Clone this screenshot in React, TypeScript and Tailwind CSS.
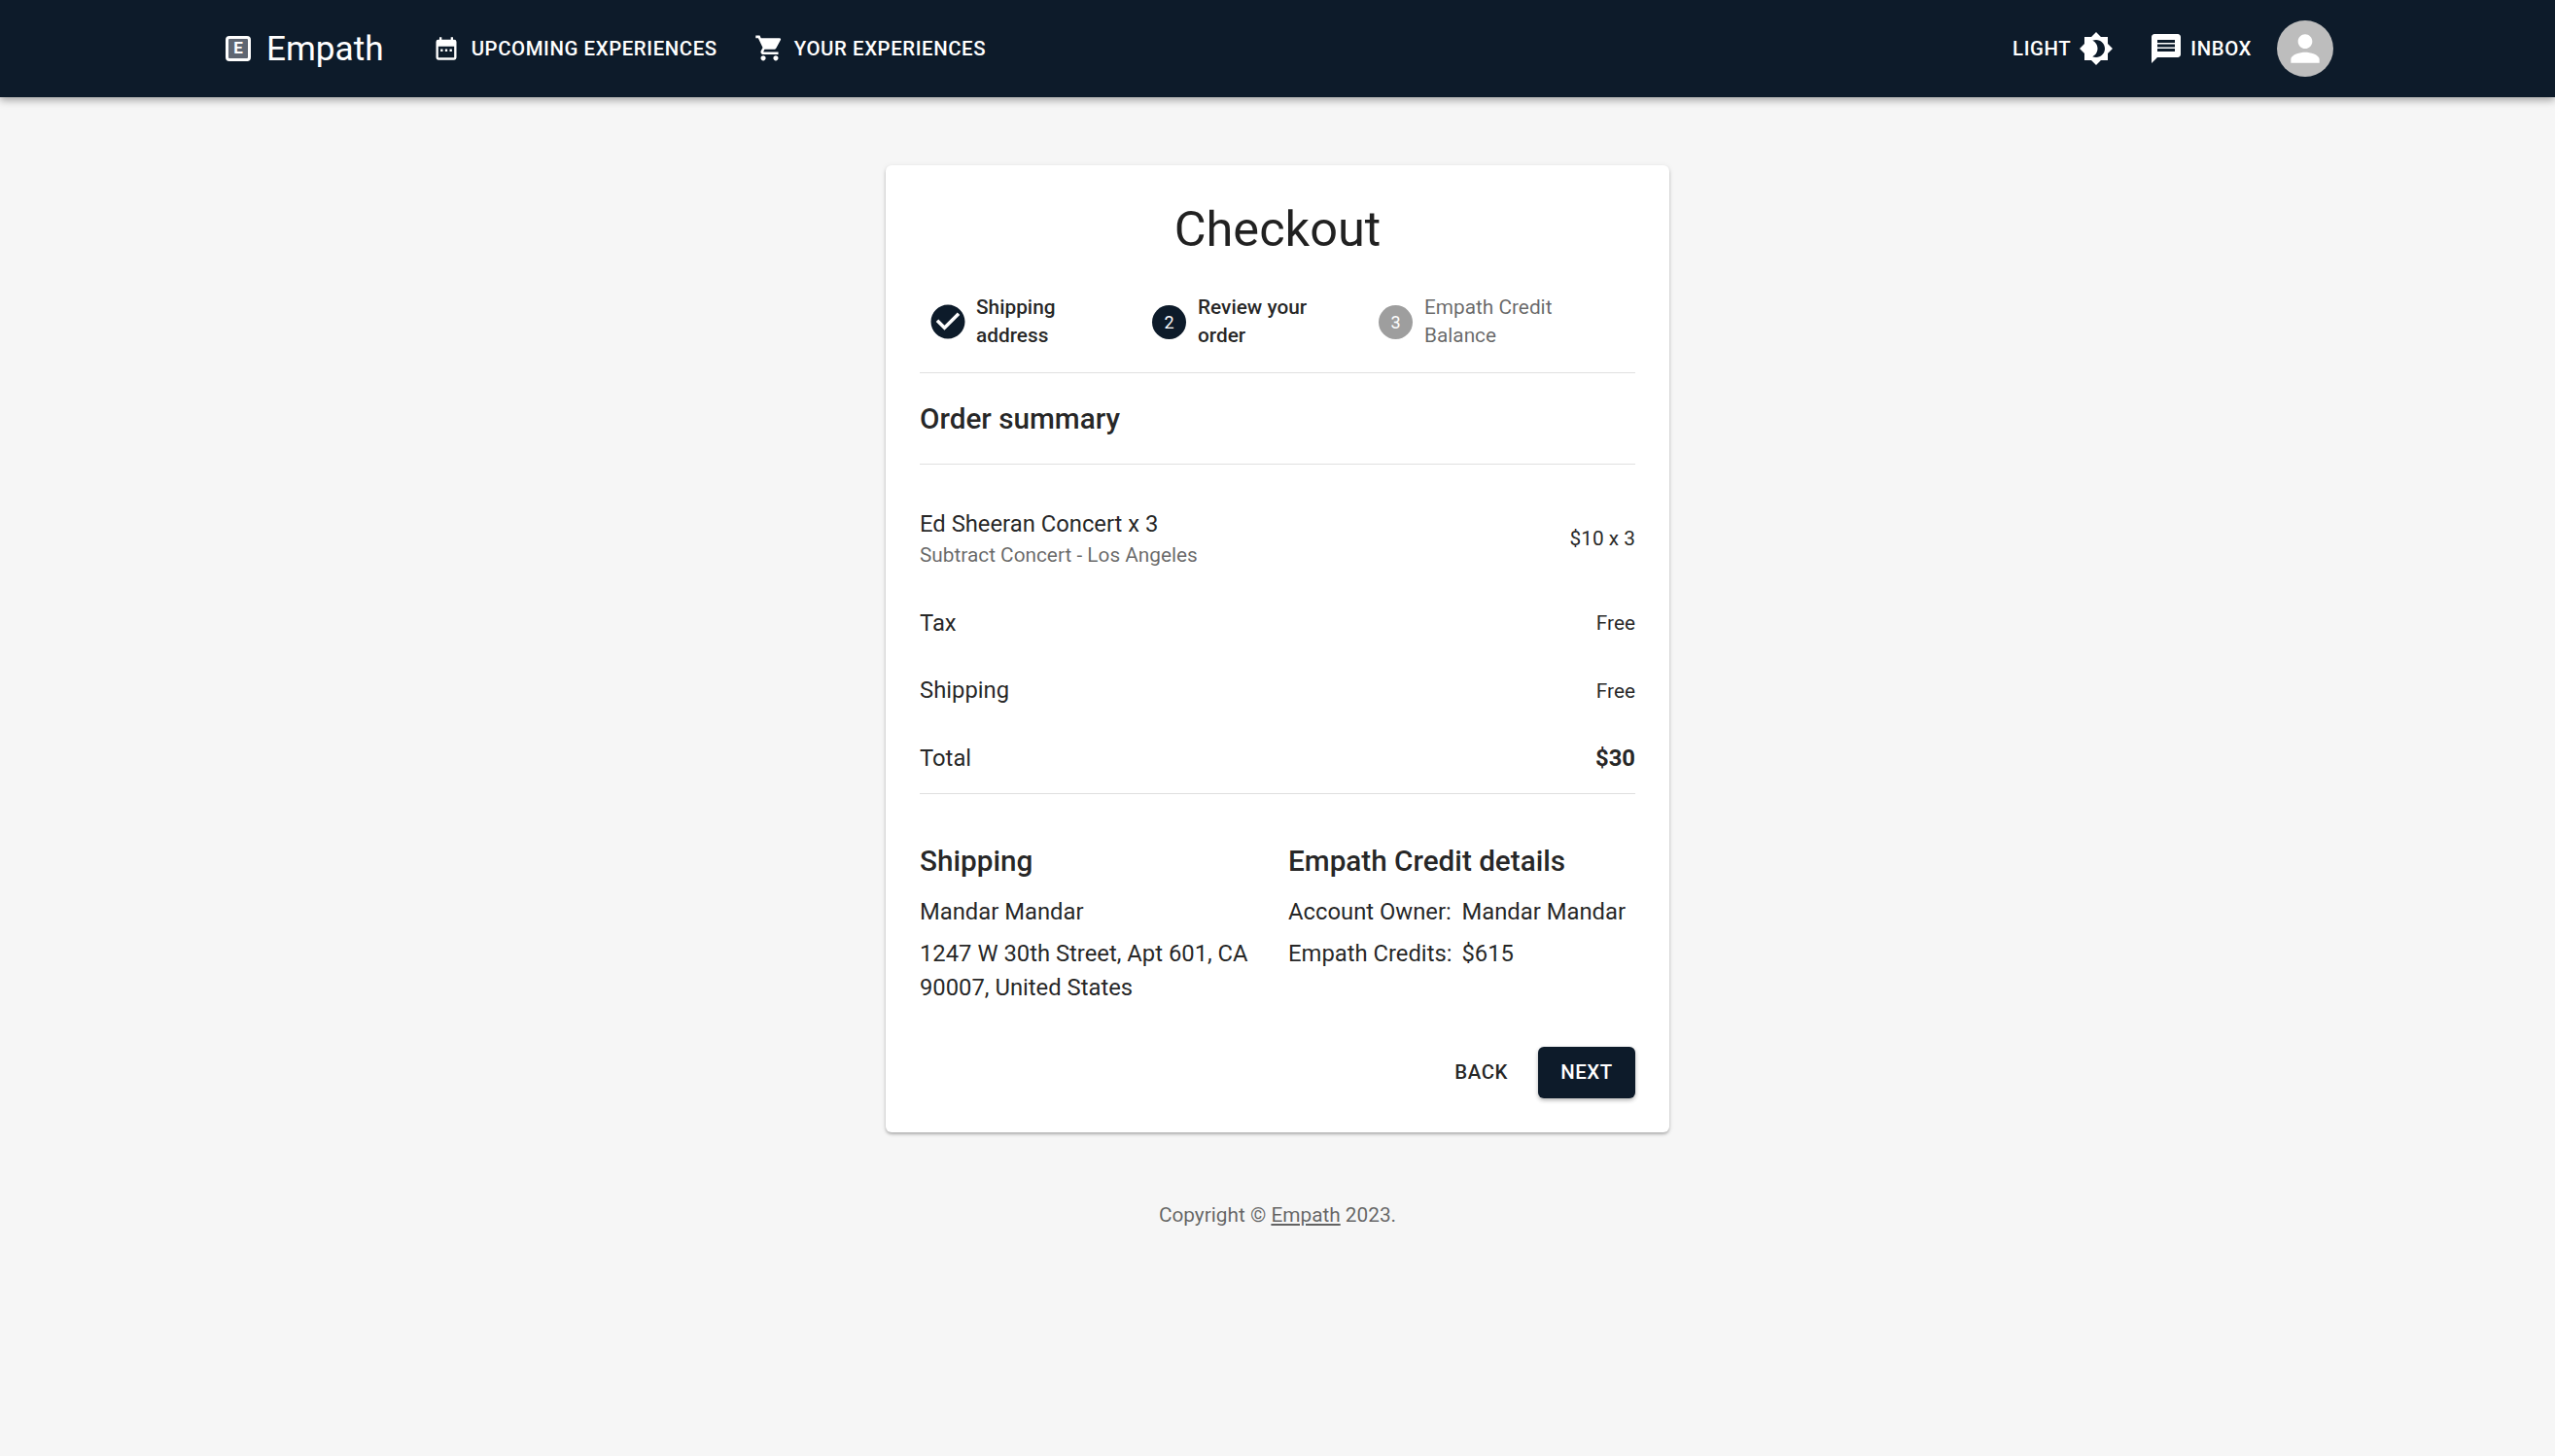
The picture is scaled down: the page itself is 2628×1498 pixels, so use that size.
import { MdBrightness4, MdCheckCircle, MdMessage, MdPerson, MdShoppingCart } from "react-icons/md";

const CalendarIcon = () => (
    <svg viewBox="0 0 24 24" className="w-[28px] h-[28px] fill-white">
        <path d="M19 4h-1V2h-2v2H8V2H6v2H5a2 2 0 0 0-2 2v14a2 2 0 0 0 2 2h14a2 2 0 0 0 2-2V6a2 2 0 0 0-2-2Zm0 16H5V10h14v10ZM7 12.5h2v2H7v-2Zm4 0h2v2h-2v-2Zm4 0h2v2h-2v-2Z" />
    </svg>
);

const Step = ({ icon, label, muted, className }: { icon: React.ReactNode; label: string[]; muted?: boolean; className: string }) => (
    <div className={`flex items-center ${className}`}>
        {typeof icon === "string" ? (
            <div
                className={`w-[35px] h-[35px] rounded-full flex items-center justify-center text-white text-[18px] shrink-0 ${
                    muted ? "bg-[#9e9e9e]" : "bg-[#0d1b2a]"
                }`}
            >
                {icon}
            </div>
        ) : (
            <div className="w-[35px] h-[35px] flex items-center justify-center shrink-0 text-[#0d1b2a]">{icon}</div>
        )}
        <div className={`pl-[12px] text-[20.8px] leading-[29px] ${muted ? "text-[#00000099]" : "font-medium text-[#000000de]"}`}>
            {label.map((l) => (
                <div key={l}>{l}</div>
            ))}
        </div>
    </div>
);

const Row = ({ name, value, bold }: { name: string; value: string; bold?: boolean }) => (
    <div className="flex items-center justify-between h-[69.5px]">
        <span className="text-[23.8px]">{name}</span>
        <span className={bold ? "text-[23.8px] font-bold" : "text-[20.8px]"}>{value}</span>
    </div>
);

export default function App() {
    return (
        <div className="min-h-screen bg-[#f6f6f6] font-['Roboto',sans-serif] text-[#000000de]">
            {/* Header */}
            <header className="h-[100px] bg-[#0d1b2a] text-white flex items-center justify-between pl-[232px] pr-[228px] shadow-[0_3px_8px_rgba(0,0,0,0.35)]">
                <div className="flex items-center">
                    <div className="w-[26px] h-[26px] rounded-[4px] border-[3px] border-white bg-[#5f6672] flex items-center justify-center text-[17px] font-bold leading-none">
                        E
                    </div>
                    <span className="ml-[16px] pt-[2px] text-[35.2px] leading-none">Empath</span>
                    <div className="ml-[50px] flex items-center gap-[12px] text-[20.4px] font-medium tracking-[0.58px]">
                        <CalendarIcon />
                        UPCOMING EXPERIENCES
                    </div>
                    <div className="ml-[38px] flex items-center gap-[10px] text-[20.4px] font-medium tracking-[0.58px]">
                        <MdShoppingCart size={31} />
                        YOUR EXPERIENCES
                    </div>
                </div>
                <div className="flex items-center text-[20.4px] font-medium tracking-[0.58px]">
                    LIGHT
                    <MdBrightness4 size={36} className="ml-[8px]" />
                    <MdMessage size={36} className="ml-[36px]" />
                    <span className="ml-[7px]">INBOX</span>
                    <div className="ml-[26px] w-[58px] h-[58px] rounded-full bg-[#bdbdbd] flex items-center justify-center">
                        <MdPerson size={44} />
                    </div>
                </div>
            </header>

            {/* Checkout card */}
            <main className="flex flex-col items-center pt-[70px]">
                <div className="w-[806px] h-[995px] bg-white rounded-[6px] px-[35px] shadow-[0_2px_3px_rgba(0,0,0,0.25),0_1px_6px_rgba(0,0,0,0.08)]">
                    <h1 className="text-center text-[50.5px] leading-[64px] pt-[34px]">Checkout</h1>
                    <div className="flex items-center h-[58px] mt-[34px] pl-[11px]">
                        <Step className="w-[228px]" icon={<MdCheckCircle size={42} className="shrink-0" />} label={["Shipping", "address"]} />
                        <Step className="w-[233px]" icon="2" label={["Review your", "order"]} />
                        <Step className="" icon="3" label={["Empath Credit", "Balance"]} muted />
                    </div>
                    <div className="mt-[23px] border-t border-[#e0e0e0]" />
                    <h2 className="h-[93px] pt-[2px] flex items-center text-[29.7px] font-medium">Order summary</h2>
                    <div className="border-t border-[#e0e0e0]" />

                    <div className="flex items-center justify-between mt-[45px] h-[64px]">
                        <div>
                            <div className="text-[23.8px] leading-[32px]">Ed Sheeran Concert x 3</div>
                            <div className="text-[20.8px] leading-[32px] text-[#00000099]">Subtract Concert - Los Angeles</div>
                        </div>
                        <span className="text-[20.8px]">$10 x 3</span>
                    </div>
                    <div className="mt-[20px]">
                        <Row name="Tax" value="Free" />
                        <Row name="Shipping" value="Free" />
                        <Row name="Total" value="$30" bold />
                    </div>
                    <div className="border-t border-[#e0e0e0]" />

                    <div className="grid grid-cols-[379px_1fr] mt-[48px]">
                        <div>
                            <h3 className="text-[29.7px] leading-[42px] font-medium">Shipping</h3>
                            <p className="text-[23.8px] leading-[35px] mt-[14px]">Mandar Mandar</p>
                            <p className="text-[23.8px] leading-[35px] mt-[8px]">
                                1247 W 30th Street, Apt 601, CA
                                <br />
                                90007, United States
                            </p>
                        </div>
                        <div>
                            <h3 className="text-[29.7px] leading-[42px] font-medium">Empath Credit details</h3>
                            <div className="grid grid-cols-[auto_1fr] gap-x-[10px] gap-y-[8px] text-[23.8px] leading-[35px] mt-[14px]">
                                <span>Account Owner:</span>
                                <span>Mandar Mandar</span>
                                <span>Empath Credits:</span>
                                <span>$615</span>
                            </div>
                        </div>
                    </div>

                    <div className="flex items-center justify-end mt-[43px]">
                        <button className="text-[20.4px] font-medium tracking-[0.58px] mr-[31px]">BACK</button>
                        <button className="w-[100px] h-[53px] rounded-[6px] bg-[#0d1b2a] text-white text-[20.4px] font-medium tracking-[0.58px] shadow-[0_2px_4px_rgba(0,0,0,0.3)]">
                            NEXT
                        </button>
                    </div>
                </div>

                <p className="mt-[71px] text-[20.8px] leading-[28px] text-[#00000099]">
                    Copyright © <span className="underline">Empath</span> 2023.
                </p>
            </main>
        </div>
    );
}
